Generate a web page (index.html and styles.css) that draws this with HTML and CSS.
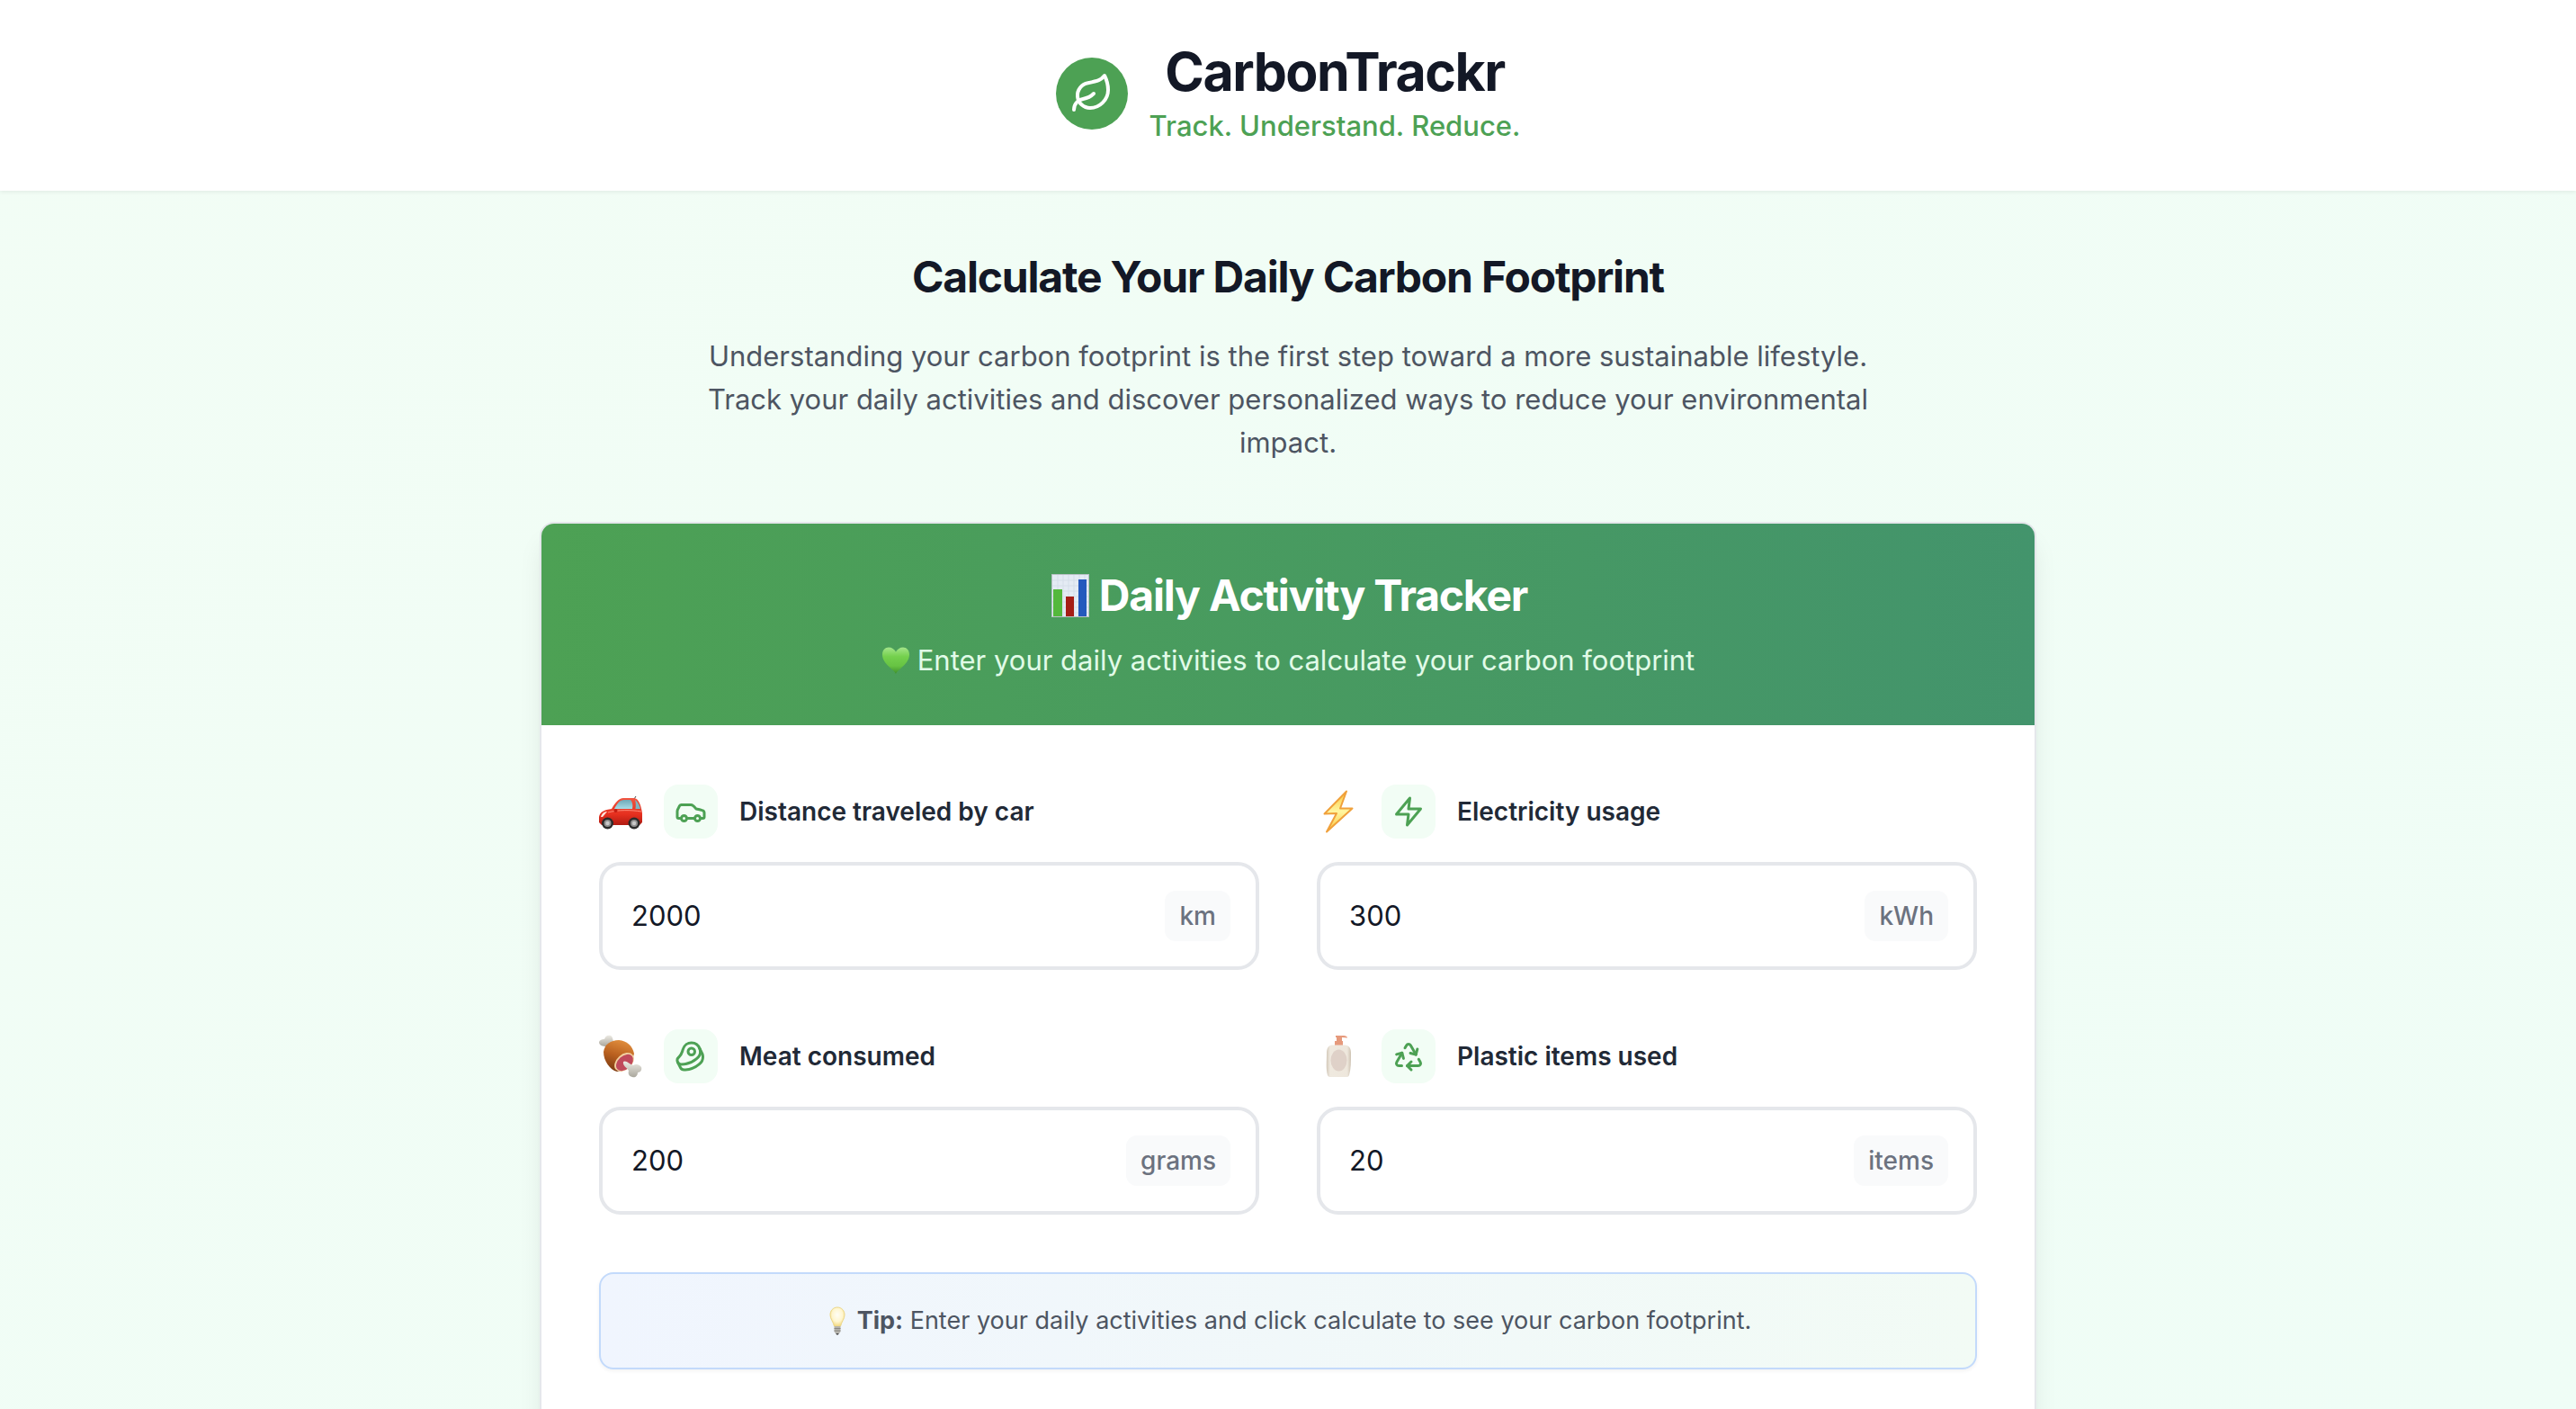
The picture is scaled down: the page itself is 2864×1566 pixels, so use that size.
FILE: index.html
```html
<!DOCTYPE html>
<html lang="en">
<head>
<meta charset="utf-8">
<title>CarbonTrackr</title>
<meta name="viewport" content="width=device-width, initial-scale=1">
<link rel="stylesheet" href="styles.css">
</head>
<body>
<header class="site-header">
  <div class="logo">
    <svg class="logo-icon" viewBox="0 0 24 24" aria-hidden="true"><path d="M11 20A7 7 0 0 1 9.8 6.1C15.5 5 17 4.48 19 2c1 2 2 4.18 2 8 0 5.5-4.78 10-10 10Z"/><path d="M2 21c0-3 1.85-5.36 5.08-6C9.5 14.52 12 13 13 12"/></svg>
  </div>
  <div class="brand">
    <h1 class="brand-name">CarbonTrackr</h1>
    <p class="brand-tagline">Track. Understand. Reduce.</p>
  </div>
</header>

<main class="page">
  <section class="intro">
    <h2 class="intro-title">Calculate Your Daily Carbon Footprint</h2>
    <p class="intro-text">Understanding your carbon footprint is the first step toward a more sustainable lifestyle. Track your daily activities and discover personalized ways to reduce your environmental impact.</p>
  </section>

  <section class="card">
    <div class="card-header">
      <h3 class="card-title">
        <svg class="emoji-chart" viewBox="0 0 48 48" aria-hidden="true">
          <rect x="3" y="0" width="42" height="48" fill="#b9c2c6"/><rect x="4" y="1" width="40" height="46" fill="#e4ebf4"/>
          <path d="M4 7h40M4 13h40M4 19h40M4 25h40M4 31h40M4 37h40M4 43h40M10 1v46M16 1v46M22 1v46M28 1v46M34 1v46M40 1v46" stroke="#d5dee9"/>
          <rect x="5" y="17" width="10" height="30" fill="#54b83c"/><rect x="19" y="25" width="9" height="22" fill="#a51d16"/><rect x="33" y="6" width="9" height="41" fill="#2459bd"/>
        </svg>
        <span>Daily Activity Tracker</span>
      </h3>
      <p class="card-subtitle">
        <svg class="emoji-heart" viewBox="0 0 32 32" aria-hidden="true">
          <defs><linearGradient id="heart" x1="0" y1="0" x2="0" y2="1"><stop offset="0" stop-color="#a4e58a"/><stop offset=".35" stop-color="#74d04d"/><stop offset=".7" stop-color="#67c343"/><stop offset="1" stop-color="#3e8f2b"/></linearGradient></defs>
          <path d="M16 31C14 26 1 20 1 9.500C1 4.500 4 1.500 8 1.500C11.500 1.500 14.500 3.500 16 6.500C17.500 3.500 20.500 1.500 24 1.500C28 1.500 31 4.500 31 9.500C31 20 18 26 16 31Z" fill="url(#heart)"/>
        </svg>
        <span>Enter your daily activities to calculate your carbon footprint</span>
      </p>
    </div>

    <form class="card-body">
      <div class="fields">
        <div class="field">
          <label class="field-label" for="car">
            <svg class="emoji" viewBox="0 0 48 48" aria-hidden="true">
              <defs>
                <linearGradient id="carbody" x1="0" y1="0" x2="0" y2="1"><stop offset="0" stop-color="#f2543f"/><stop offset=".6" stop-color="#e6301f"/><stop offset="1" stop-color="#b01b12"/></linearGradient>
                <linearGradient id="glass" x1="0" y1="0" x2="0" y2="1"><stop offset="0" stop-color="#6fa9b7"/><stop offset="1" stop-color="#a8dce6"/></linearGradient>
              </defs>
              <path d="M39 10l2-3" stroke="#444"/>
              <path d="M0 36V30C1 24 6 22 14 21C18 14 22 9 27 9H39C44 9 47 18 48 26V36L45 39H3Z" fill="url(#carbody)"/>
              <path d="M17 21C20 15 23 11 28 11H35C37 13 38 17 37 21Z" fill="url(#glass)"/>
              <path d="M40 11C43 13 45 17 46 21H40.500C41 17 41 14 40 11Z" fill="#7fb4c0"/>
              <path d="M2 30C3 26 6 24 9 24L4 30Z" fill="#ffe6df"/>
              <path d="M10 25C20 22 36 22 47 24" stroke="#ff8a76" fill="none"/>
              <ellipse cx="18.500" cy="23" rx="2" ry="2" fill="#c41d12"/>
              <circle cx="9.500" cy="37" r="6.500" fill="#2b2b2b"/><circle cx="9.500" cy="37" r="4" fill="#8f8f8f"/><circle cx="9.500" cy="37" r="2.200" fill="#c9c9c9"/>
              <circle cx="39" cy="37" r="6.500" fill="#2b2b2b"/><circle cx="39" cy="37" r="4" fill="#8f8f8f"/><circle cx="39" cy="37" r="2.200" fill="#c9c9c9"/>
            </svg>
            <span class="icon-badge"><svg class="icon" viewBox="0 0 24 24" aria-hidden="true"><path d="M19 17h2c.6 0 1-.4 1-1v-3c0-.9-.7-1.700-1.500-1.900C18.700 10.600 16 10 16 10s-1.300-1.400-2.200-2.300c-.5-.4-1.100-.7-1.800-.7H5c-.6 0-1.100.4-1.400.9l-1.400 2.900A3.700 3.700 0 0 0 2 12v4c0 .6.4 1 1 1h2"/><circle cx="7" cy="17" r="2"/><path d="M9 17h6"/><circle cx="17" cy="17" r="2"/></svg></span>
            <span>Distance traveled by car</span>
          </label>
          <div class="input-box">
            <input class="input" id="car" type="text" inputmode="numeric" value="2000">
            <span class="unit">km</span>
          </div>
        </div>

        <div class="field">
          <label class="field-label" for="electricity">
            <svg class="emoji" viewBox="0 0 48 48" aria-hidden="true">
              <defs><linearGradient id="bolt" x1="0" y1="0" x2="0" y2="1"><stop offset="0" stop-color="#fbc53b"/><stop offset=".5" stop-color="#fff6a0"/><stop offset="1" stop-color="#fbc53b"/></linearGradient></defs>
              <path d="M33 1.500L8.500 26.500L22 26L11 46.500L39.500 20.500L26 20.500Z" fill="url(#bolt)" stroke="#f0a13c" stroke-width="2" stroke-linejoin="round"/>
            </svg>
            <span class="icon-badge"><svg class="icon" viewBox="0 0 24 24" aria-hidden="true"><path d="M13 2 3 14h9l-1 8 10-12h-9l1-8z"/></svg></span>
            <span>Electricity usage</span>
          </label>
          <div class="input-box">
            <input class="input" id="electricity" type="text" inputmode="numeric" value="300">
            <span class="unit">kWh</span>
          </div>
        </div>

        <div class="field">
          <label class="field-label" for="meat">
            <svg class="emoji" viewBox="0 0 48 48" aria-hidden="true">
              <defs>
                <linearGradient id="meatskin" x1=".6" y1="0" x2=".3" y2="1"><stop offset="0" stop-color="#e08d3c"/><stop offset=".5" stop-color="#b9601f"/><stop offset="1" stop-color="#7a3a12"/></linearGradient>
                <linearGradient id="bone" x1="0" y1="0" x2="0" y2="1"><stop offset="0" stop-color="#edebe4"/><stop offset="1" stop-color="#aaa79d"/></linearGradient>
              </defs>
              <path d="M10 13C6 13 1 13 0 9C0 6 3 5 6 5C7 1 10 0 13 1C16 3 15 7 17 9Z" fill="url(#bone)"/>
              <path d="M5 19C6 11 13 6 22 6C31 7 37 12 39 21C37 31 29 40 20 41C12 39 5 29 5 19Z" fill="url(#meatskin)"/>
              <ellipse cx="28" cy="30.500" rx="12.500" ry="8.500" transform="rotate(-42 28 30.500)" fill="#f1cf9f"/>
              <ellipse cx="28.500" cy="31" rx="11" ry="7.300" transform="rotate(-42 28.500 31)" fill="#c04a5c"/>
              <path d="M27 30C30 28 33 32 38 34C41 32 45 33 47 36C48 39 46 42 43 42C43 46 40 48 37 47C33 46 32 43 33 40C31 36 26 35 27 30Z" fill="url(#bone)"/>
            </svg>
            <span class="icon-badge"><svg class="icon" viewBox="0 0 24 24" aria-hidden="true"><circle cx="12.500" cy="8.500" r="2.500"/><path d="M12.500 2a6.500 6.500 0 0 0-6.220 4.600c-1.100 3.130-.78 3.900-3.180 6.080A3 3 0 0 0 5 18c4 0 8.400-1.800 11.400-4.300A6.500 6.500 0 0 0 12.500 2Z"/><path d="m18.500 6 2.190 4.500a6.480 6.480 0 0 1 .31 2 6.490 6.490 0 0 1-2.600 5.200C15.400 20.200 11 22 7 22a3 3 0 0 1-2.680-1.660L2.400 16.500"/></svg></span>
            <span>Meat consumed</span>
          </label>
          <div class="input-box">
            <input class="input" id="meat" type="text" inputmode="numeric" value="200">
            <span class="unit">grams</span>
          </div>
        </div>

        <div class="field">
          <label class="field-label" for="plastic">
            <svg class="emoji" viewBox="0 0 48 48" aria-hidden="true">
              <defs><linearGradient id="lotion" x1="0" y1="0" x2="1" y2="0"><stop offset="0" stop-color="#d2c8b9"/><stop offset=".15" stop-color="#efe9df"/><stop offset=".85" stop-color="#eee7dc"/><stop offset="1" stop-color="#cdc2b2"/></linearGradient></defs>
              <path d="M21 1H30C32 1 34 2 34 3.500L28 3V7H29V12H20V7H22V3H21Z" fill="#e69a7c"/>
              <path d="M17 11.500H31C36 12 38 15 38 20C38 30 38 38 36 45C35 47 34 47 32 47H16C14 47 13 47 12 45C10 38 11 30 11 20C11 15 13 12 17 11.500Z" fill="url(#lotion)"/>
              <ellipse cx="24.500" cy="28.500" rx="9" ry="12" fill="#dfd1c8"/>
            </svg>
            <span class="icon-badge"><svg class="icon" viewBox="0 0 24 24" aria-hidden="true"><path d="M7 19H4.815a1.830 1.830 0 0 1-1.570-.881 1.785 1.785 0 0 1-.004-1.784L7.196 9.500"/><path d="M11 19h8.203a1.830 1.830 0 0 0 1.556-.890 1.784 1.784 0 0 0 0-1.775l-1.226-2.120"/><path d="m14 16-3 3 3 3"/><path d="M8.293 13.596 7.196 9.500 3.100 10.598"/><path d="m9.344 5.811 1.093-1.892A1.830 1.830 0 0 1 11.985 3a1.784 1.784 0 0 1 1.546.888l3.943 6.843"/><path d="m13.378 9.633 4.096 1.098 1.097-4.096"/></svg></span>
            <span>Plastic items used</span>
          </label>
          <div class="input-box">
            <input class="input" id="plastic" type="text" inputmode="numeric" value="20">
            <span class="unit">items</span>
          </div>
        </div>
      </div>

      <p class="tip">
        <svg class="emoji-bulb" viewBox="0 0 28 32" aria-hidden="true">
          <defs><radialGradient id="bulb" cx=".5" cy=".4" r=".6"><stop offset="0" stop-color="#fffef6"/><stop offset=".6" stop-color="#fff6cf"/><stop offset="1" stop-color="#f3d981"/></radialGradient></defs>
          <path d="M14 1C19 1 22 5 22 9.500C22 14 18.500 17 17.500 22H10.500C9.500 17 6 14 6 9.500C6 5 9 1 14 1Z" fill="url(#bulb)" stroke="#ecd684"/>
          <path d="M10.500 22H17.500V28L16 30H12L10.500 28Z" fill="#b5b3ad"/><path d="M10.500 24.500H17.500M10.500 27H17.500" stroke="#8b8983"/><path d="M12 30H16L14 32Z" fill="#444"/>
        </svg>
        <span><strong>Tip:</strong> Enter your daily activities and click calculate to see your carbon footprint.</span>
      </p>
    </form>
  </section>
</main>
</body>
</html>
```
FILE: styles.css
```css
*, *::before, *::after { box-sizing: border-box; }

body {
  margin: 0;
  min-height: 100vh;
  font-family: Inter, "Liberation Sans", sans-serif;
  font-size: 31px;
  line-height: 48px;
  color: #131826;
  background: linear-gradient(to bottom right, #f2fdf5, #effdf6);
}

h1, h2, h3, p { margin: 0; }

svg { display: block; flex: none; }

.site-header {
  display: flex;
  align-items: center;
  justify-content: center;
  gap: 24px;
  padding: 48px 32px;
  background: #fff;
  border-bottom: 4px solid #fff;
  box-shadow: 0 2px 4px rgba(0, 0, 0, .06);
}

.logo {
  display: grid;
  place-items: center;
  width: 80px;
  height: 80px;
  border-radius: 50%;
  background: #4da154;
}

.logo-icon, .icon {
  fill: none;
  stroke: currentColor;
  stroke-width: 2;
  stroke-linecap: round;
  stroke-linejoin: round;
}

.logo-icon { width: 48px; height: 48px; color: #fff; }

.brand { text-align: center; }

.brand-name {
  margin-bottom: 8px;
  font-size: 59px;
  line-height: 64px;
  font-weight: 700;
  letter-spacing: -0.025em;
}

.brand-tagline {
  line-height: 40px;
  font-weight: 500;
  color: #4da154;
}

.page {
  max-width: 1728px;
  margin: 0 auto;
  padding: 64px 32px 0;
}

.intro {
  max-width: 1344px;
  margin: 0 auto 64px;
  text-align: center;
}

.intro-title {
  margin-bottom: 32px;
  font-size: 48px;
  line-height: 64px;
  font-weight: 700;
  letter-spacing: -0.025em;
}

.intro-text { color: #4d5562; }

.card {
  overflow: hidden;
  border: 2px solid #e5e7eb;
  border-radius: 16px;
  background: #fff;
  box-shadow: 0 20px 30px -6px rgba(0, 0, 0, .1), 0 8px 12px -8px rgba(0, 0, 0, .1);
}

.card-header {
  padding: 48px;
  color: #fff;
  background: linear-gradient(to right, #4da154, #43946c);
}

.card-title, .card-subtitle, .tip {
  display: flex;
  align-items: center;
  justify-content: center;
  gap: 8px;
}

.card-title {
  margin-bottom: 16px;
  font-size: 48px;
  line-height: 64px;
  font-weight: 700;
  letter-spacing: -0.025em;
}

.card-subtitle { color: #e1fbe8; }

.emoji-chart, .emoji { width: 48px; height: 48px; }
.emoji-heart { width: 32px; height: 32px; }
.emoji-bulb { width: 28px; height: 32px; }

.card-body { padding: 64px 64px 112px; }

.fields {
  display: grid;
  grid-template-columns: 1fr 1fr;
  gap: 64px;
  margin-bottom: 64px;
}

.field-label {
  display: flex;
  align-items: center;
  gap: 24px;
  height: 64px;
  margin-bottom: 24px;
  font-size: 28px;
  line-height: 40px;
  font-weight: 600;
  color: #212936;
}

.icon-badge {
  display: grid;
  place-items: center;
  width: 60px;
  height: 60px;
  border-radius: 16px;
  color: #4da154;
  background: #f2fdf5;
}

.icon { width: 36px; height: 36px; }

.input-box {
  display: flex;
  align-items: center;
  height: 120px;
  padding: 0 28px 0 32px;
  border: 4px solid #e5e7eb;
  border-radius: 24px;
  background: #fff;
}

.input {
  flex: 1;
  min-width: 0;
  padding: 0;
  border: 0;
  outline: 0;
  font: inherit;
  color: inherit;
  background: transparent;
}

.unit {
  padding: 8px 16px;
  border-radius: 12px;
  font-size: 28px;
  line-height: 40px;
  font-weight: 500;
  color: #6c727f;
  background: #f9fafb;
}

.tip {
  padding: 32px;
  border: 2px solid #c3dafb;
  border-radius: 16px;
  font-size: 27px;
  line-height: 40px;
  color: #4d5562;
  background: linear-gradient(to right, #f0f5fe, #f2fbf5);
  box-shadow: 0 2px 4px rgba(0, 0, 0, .05);
}

.tip strong { font-weight: 700; }
```
